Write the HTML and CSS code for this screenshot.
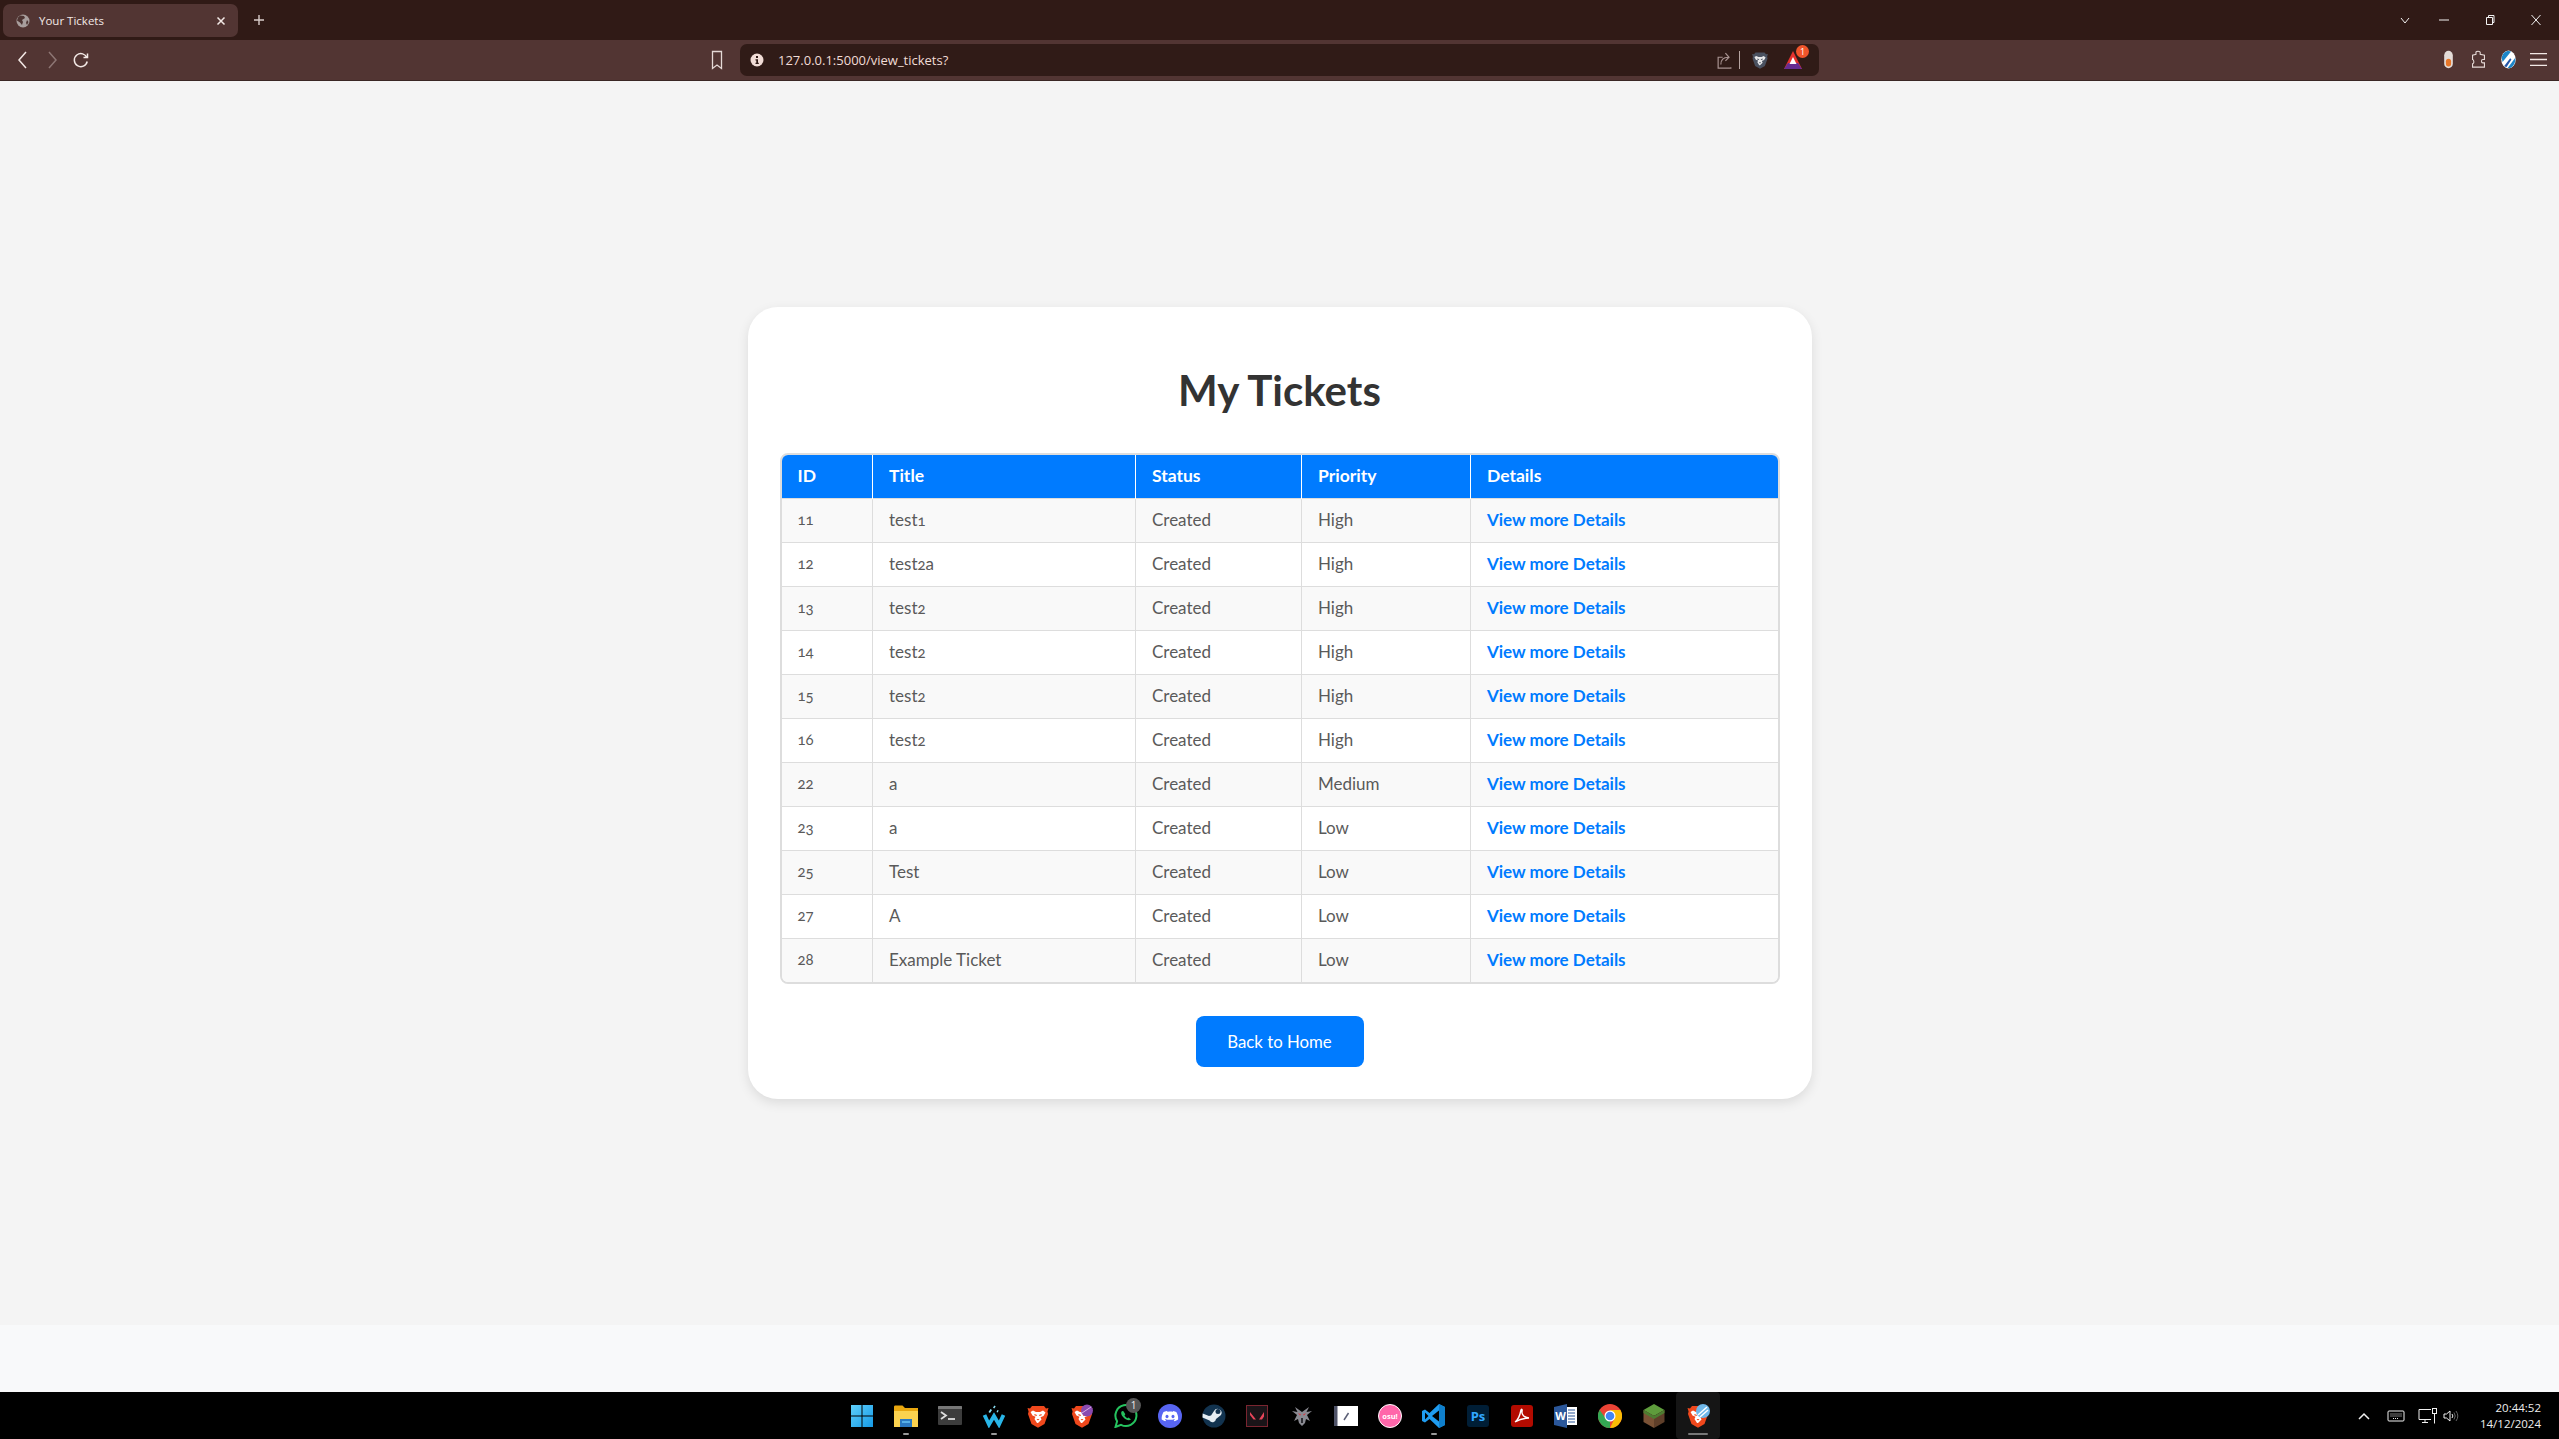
FILE: index.html
```html
<!DOCTYPE html>
<html lang="en">
<head>
    <meta charset="UTF-8">
    <title>Your Tickets</title>
    <link rel="stylesheet" href="styles.css">
</head>
<body>
    <svg class="defs" width="0" height="0">
        <linearGradient id="win-blue" x1="0" y1="0" x2="1" y2="1">
            <stop offset="0" stop-color="#5fd0fb"/>
            <stop offset="1" stop-color="#1599e6"/>
        </linearGradient>
        <symbol id="shield" viewBox="0 0 24 24">
            <path d="M6 2h12l2 2.400 2.500-.4-1 3.500.6 2.500-3.600 10-6.500 3.800L5.500 20 2 10l.6-2.500L1.500 4 4 4.400z"/>
        </symbol>
        <symbol id="lion" viewBox="0 0 24 24">
            <path fill-rule="evenodd" d="M7 6.500l3 1.500h4l3-1.500 2.500 2-2 3.500-3 1.200 1 2.300-3.500 3.500h-1L8.500 15l1-2.300-3-1.200-2-3.500zM8.500 10l2.500 1-.5 1-2.200-.7zM15.500 10l-2.500 1 .5 1 2.200-.7zM10.500 15h3L12 16.500z"/>
        </symbol>
    </svg>

    <div class="tabstrip">
        <div class="tab">
            <svg class="tab-globe" viewBox="0 0 14 14">
                <circle cx="7" cy="7" r="6.500" fill="#a89e9d"/>
                <path d="M4 1.500l4 .5 1 2-3 2 1 2-1 3-2-2.500-3-2 1-3zM11 6l1.500 2-1.500 3-1-2z" fill="#4d3432"/>
            </svg>
            <span class="tab-title">Your Tickets</span>
            <svg class="tab-close" viewBox="0 0 10 10"><path d="M1.500 1.500l7 7M8.500 1.500l-7 7"/></svg>
        </div>
        <svg class="new-tab" viewBox="0 0 12 12"><path d="M6 1v10M1 6h10"/></svg>
        <div class="window-controls">
            <svg class="win-icon win-chevron" viewBox="0 0 12 12"><path d="M2 4l4 5 4-5"/></svg>
            <svg class="win-icon" viewBox="0 0 12 12"><path d="M1 6h10"/></svg>
            <svg class="win-icon" viewBox="0 0 12 12"><path d="M2.500 3.500h6v7h-6zM4.500 3.500v-2h5.500v7h-1.500"/></svg>
            <svg class="win-icon" viewBox="0 0 12 12"><path d="M1.500 1l9 10M10.500 1l-9 10"/></svg>
        </div>
    </div>

    <div class="toolbar">
        <div class="nav-buttons">
            <svg class="nav-icon" viewBox="0 0 16 20"><path d="M11 2L4 10l7 8"/></svg>
            <svg class="nav-icon nav-off" viewBox="0 0 16 20"><path d="M5 2l7 8-7 8"/></svg>
            <svg class="nav-icon" viewBox="0 0 16 20"><path d="M14 8a6.500 6.500 0 1 0 .2 3.500M10.500 7.500h4v-4"/></svg>
        </div>
        <svg class="bookmark" viewBox="0 0 12 20"><path d="M1.500 1.500h9v17L6 15l-4.500 3.500z"/></svg>
        <div class="urlbar">
            <svg class="info-icon" viewBox="0 0 14 14">
                <circle cx="7" cy="7" r="6.500" fill="#f1dcd6"/>
                <path d="M6 3h2v2H6zM5.500 6.200H8v3.600h.8V11H5.500V9.800h.8V7.400h-.8z" fill="#301b17"/>
            </svg>
            <span class="url">127.0.0.1:5000/view_tickets?</span>
            <svg class="share-icon" viewBox="0 0 18 22"><path d="M7 8H2v12h14v-1M5 16c0-5 3-8 8-8M10 3.500L14 8l-4 4"/></svg>
            <span class="url-sep"></span>
            <svg class="shield-icon" viewBox="0 0 24 24">
                <use href="#shield" fill="#4a5160"/>
                <use href="#lion" fill="#e8e8ea"/>
            </svg>
            <span class="bat-icon">
                <svg viewBox="0 0 20 20">
                    <path d="M10 1l9 18H1z" fill="#e4322e"/>
                    <path d="M5 13h10l4 6H1z" fill="#662d91"/>
                    <path d="M10 7l3.500 7h-7z" fill="#fff"/>
                </svg>
                <span class="bat-badge">1</span>
            </span>
        </div>
        <div class="extensions">
            <svg class="ext-icon ext-pill" viewBox="0 0 12 22">
                <rect x="1" y="1" width="10" height="20" rx="5" fill="#e4dcd8"/>
                <rect x="3" y="10" width="6" height="9" rx="3" fill="#e8772a"/>
            </svg>
            <svg class="ext-icon puzzle" viewBox="0 0 20 22"><path d="M7 2.500c0-1.500 5-1.500 5 0V5l5 1v5h-2c-2 0-2 4 0 4h2v5H3v-4c2 0 2-5 0-5V6l4-1z"/></svg>
            <svg class="ext-icon" viewBox="0 0 20 22">
                <ellipse cx="10" cy="11" rx="8.500" ry="10.500" fill="#fff"/>
                <path d="M2 9c1-5 4-8 8-8l3 .5L3 14zM9 21l9-12c.5 4-1 10-6 12z" fill="#1d86c9"/>
                <path d="M5 18.500l7-9 1.500 1.500-6 9z" fill="#2456a8"/>
            </svg>
            <svg class="ext-icon menu" viewBox="0 0 16 14"><path d="M0 1.500h16M0 7h16M0 12.500h16"/></svg>
        </div>
    </div>

    <main class="page">
        <section class="card">
            <h1>My Tickets</h1>
            <div class="table-wrap">
                <table>
                    <colgroup>
                        <col class="col-id"><col class="col-title"><col class="col-status"><col class="col-priority"><col class="col-details">
                    </colgroup>
                    <thead>
                        <tr><th>ID</th><th>Title</th><th>Status</th><th>Priority</th><th>Details</th></tr>
                    </thead>
                    <tbody>
                        <tr><td class="num">11</td><td>test<span class="num">1</span></td><td>Created</td><td>High</td><td><a href="#">View more Details</a></td></tr>
                        <tr><td class="num">12</td><td>test<span class="num">2</span>a</td><td>Created</td><td>High</td><td><a href="#">View more Details</a></td></tr>
                        <tr><td class="num">13</td><td>test<span class="num">2</span></td><td>Created</td><td>High</td><td><a href="#">View more Details</a></td></tr>
                        <tr><td class="num">14</td><td>test<span class="num">2</span></td><td>Created</td><td>High</td><td><a href="#">View more Details</a></td></tr>
                        <tr><td class="num">15</td><td>test<span class="num">2</span></td><td>Created</td><td>High</td><td><a href="#">View more Details</a></td></tr>
                        <tr><td class="num">16</td><td>test<span class="num">2</span></td><td>Created</td><td>High</td><td><a href="#">View more Details</a></td></tr>
                        <tr><td class="num">22</td><td>a</td><td>Created</td><td>Medium</td><td><a href="#">View more Details</a></td></tr>
                        <tr><td class="num">23</td><td>a</td><td>Created</td><td>Low</td><td><a href="#">View more Details</a></td></tr>
                        <tr><td class="num">25</td><td>Test</td><td>Created</td><td>Low</td><td><a href="#">View more Details</a></td></tr>
                        <tr><td class="num">27</td><td>A</td><td>Created</td><td>Low</td><td><a href="#">View more Details</a></td></tr>
                        <tr><td class="num">28</td><td>Example Ticket</td><td>Created</td><td>Low</td><td><a href="#">View more Details</a></td></tr>
                    </tbody>
                </table>
            </div>
            <a class="back-button" href="#">Back to Home</a>
        </section>
    </main>

    <div class="page-foot"></div>

    <footer class="taskbar">
        <div class="task-spacer"></div>
        <div class="task-icons">
            <div class="task-item">
                <svg viewBox="0 0 24 24">
                    <path d="M1 1h10.500v10.500H1zM12.500 1H23v10.500H12.500zM1 12.500h10.500V23H1zM12.500 12.500H23V23H12.500z" fill="url(#win-blue)"/>
                </svg>
            </div>
            <div class="task-item running">
                <svg viewBox="0 0 24 24">
                    <path d="M0 3c0-1 .5-1.500 1.500-1.500h7L11 4h13v19H0z" fill="#e9a70f"/>
                    <path d="M0 7h24v16H0z" fill="#fbd24f"/>
                    <path d="M6 15h12v8H6z" fill="#2b79c2"/>
                    <path d="M8 17h8v2H8z" fill="#57b0e8"/>
                </svg>
            </div>
            <div class="task-item">
                <svg viewBox="0 0 24 24">
                    <rect y="2" width="24" height="19" rx="1" fill="#3c3c3c"/>
                    <path d="M0 3c0-1 .5-1 1-1h22c.5 0 1 0 1 1v2H0z" fill="#777"/>
                    <path d="M3 8l5 3.500L3 15" fill="none" stroke="#ddd" stroke-width="1.800"/>
                    <path d="M10 15h7" stroke="#ddd" stroke-width="1.800"/>
                </svg>
            </div>
            <div class="task-item running">
                <svg viewBox="0 0 24 24">
                    <path d="M2.500 11l4.500 9.500 5-8.500 5 8.500 4.500-9.500" fill="none" stroke="#29b6e8" stroke-width="3.800"/>
                    <path d="M6.500 8l2-3 1.500 1-2 3zM11 3.500l1.500-2 1.200 1-1.500 2zM14.500 8l1-2 1.200.6-1 2z" fill="#8be0f5"/>
                </svg>
            </div>
            <div class="task-item">
                <svg viewBox="0 0 24 24">
                    <use href="#shield" fill="#f0481c"/>
                    <use href="#lion" fill="#fff"/>
                </svg>
            </div>
            <div class="task-item">
                <svg viewBox="0 0 24 24">
                    <use href="#shield" fill="#f0481c"/>
                    <use href="#lion" fill="#fff"/>
                    <circle cx="17" cy="6.500" r="6" fill="#8a4bb0"/>
                    <path d="M12 9l9-6" stroke="#d9b3e8" stroke-width="1"/>
                </svg>
            </div>
            <div class="task-item">
                <svg viewBox="0 0 24 24">
                    <path d="M1.500 23l1.600-5.800A10.500 10.500 0 1 1 7 20.800z" fill="none" stroke="#25c35f" stroke-width="2"/>
                    <path d="M8 7c-1.500 1.500-1 4 1.500 6.500S15 17 17 15.500l-2.500-2-1.200.8c-1-.5-2.300-1.800-2.800-2.800l.8-1.300L9.500 7.200z" fill="#25c35f"/>
                </svg>
                <span class="task-badge">1</span>
            </div>
            <div class="task-item">
                <svg viewBox="0 0 24 24">
                    <circle cx="12" cy="12" r="12" fill="#5865f2"/>
                    <path d="M8.500 7c-1 .2-2 .5-3 1-1.500 2.500-2 5-1.800 7.500 1.200.9 2.500 1.400 3.600 1.700l.8-1.300c-.5-.2-1-.4-1.300-.7l.3-.3c2.800 1.200 6.800 1.200 9.600 0l.3.3c-.4.300-.8.500-1.300.7l.8 1.300c1.200-.3 2.400-.8 3.600-1.700.3-3-.4-5.400-1.800-7.500-1-.5-2-.8-3-1l-.4.700c-1.800-.3-3.200-.3-5 0z" fill="#fff"/>
                    <ellipse cx="9" cy="12.500" rx="1.500" ry="1.700" fill="#5865f2"/>
                    <ellipse cx="15" cy="12.500" rx="1.500" ry="1.700" fill="#5865f2"/>
                </svg>
            </div>
            <div class="task-item">
                <svg viewBox="0 0 24 24">
                    <circle cx="12" cy="12" r="11.500" fill="#12334f"/>
                    <path d="M.5 13.500l7 3a3.500 3.500 0 0 0 6.500-1.500l5-4A4 4 0 1 0 12 7l-3 4.500c-1 0-1.500.2-2 .6L.7 9.500z" fill="#e4edf3"/>
                    <circle cx="16" cy="7.500" r="2.500" fill="#12334f"/>
                </svg>
            </div>
            <div class="task-item">
                <svg viewBox="0 0 24 24">
                    <rect x=".5" y="1.500" width="21" height="21" fill="#1a1418" stroke="#7a2530"/>
                    <path d="M4 8l6 7.500H7.500L4 11zM18 8l-5 7.500h3l2-3z" fill="#e8455a"/>
                </svg>
            </div>
            <div class="task-item">
                <svg viewBox="0 0 24 24">
                    <path d="M12 8L5 3l2.500 5L2 7l5 4-3 6 4-2 1 4 3 3 3-3 1-4 4 2-3-6 5-4-5.500 1L19 3z" fill="#8a8a92"/>
                    <path d="M8 9l3 1.500-1 1zM16 9l-3 1.500 1 1z" fill="#e0303c"/>
                    <path d="M11 14h2v5h-2z" fill="#2c2c32"/>
                </svg>
            </div>
            <div class="task-item">
                <svg viewBox="0 0 24 24">
                    <rect y="2" width="24" height="20" fill="#fff"/>
                    <path d="M0 2h3.500v20H0z" fill="#4f5368"/>
                    <path d="M10 16l4.500-7" stroke="#5a5e75" stroke-width="1.500"/>
                </svg>
            </div>
            <div class="task-item">
                <svg viewBox="0 0 24 24">
                    <circle cx="12" cy="12" r="11.500" fill="#ff66aa" stroke="#fff"/>
                    <text class="osu-text" x="12" y="15">osu!</text>
                </svg>
            </div>
            <div class="task-item running">
                <svg viewBox="0 0 24 24">
                    <path d="M17 0l6 3v18l-6 3-9.500-9L3 18.500 0 17v-10l3-1.500L7.500 9z" fill="#1f9cf0"/>
                    <path d="M17 6.500L10 12l7 5.500z" fill="#000"/>
                    <path d="M3 8.500L6.500 12 3 15.500z" fill="#000"/>
                    <path d="M17 0l6 3v18l-6 3z" fill="#0f7fcc"/>
                </svg>
            </div>
            <div class="task-item">
                <svg viewBox="0 0 24 24">
                    <rect x="1" y="1" width="22" height="22" rx="3" fill="#001e36"/>
                    <text class="ps-text" x="12" y="17">Ps</text>
                </svg>
            </div>
            <div class="task-item">
                <svg viewBox="0 0 24 24">
                    <rect x="1" y="1" width="22" height="22" rx="3" fill="#b30b00"/>
                    <path d="M5 18c3-2 5-7 6-12 .5-1.500 1.500-.5 1 1.500-.5 3 2 6 7 6.500-4 0-9 1-14 4z" fill="none" stroke="#fff" stroke-width="1.400"/>
                </svg>
            </div>
            <div class="task-item">
                <svg viewBox="0 0 24 24">
                    <path d="M9 3h14v18H9z" fill="#fff"/>
                    <path d="M14 6h7M14 9h7M14 12h7M14 15h7M14 18h7" stroke="#2b579a" stroke-width="1.200"/>
                    <path d="M0 3l13-3v24L0 21z" fill="#2b579a"/>
                    <text class="word-text" x="6.500" y="16">W</text>
                </svg>
            </div>
            <div class="task-item">
                <svg viewBox="0 0 24 24">
                    <circle cx="12" cy="12" r="12" fill="#ea4335"/>
                    <path d="M12 24a12 12 0 0 1-10.400-18L7 13.500l5 4z" fill="#34a853"/>
                    <path d="M12 24a12 12 0 0 0 10.400-18H12l5 7.500z" fill="#fbbc05"/>
                    <circle cx="12" cy="12" r="5.500" fill="#fff"/>
                    <circle cx="12" cy="12" r="4.300" fill="#4285f4"/>
                </svg>
            </div>
            <div class="task-item">
                <svg viewBox="0 0 24 24">
                    <path d="M12 0l10.500 6L12 12 1.500 6z" fill="#5e9c3c"/>
                    <path d="M1.500 6L12 12v12L1.500 18z" fill="#7a5236"/>
                    <path d="M22.500 6L12 12v12l10.500-6z" fill="#5f3f2a"/>
                    <path d="M1.500 6L12 12v3L1.500 9zM22.500 6L12 12v3l10.500-6z" fill="#4d7d31"/>
                </svg>
            </div>
            <div class="task-item active running">
                <svg viewBox="0 0 24 24">
                    <use href="#shield" fill="#f0481c"/>
                    <use href="#lion" fill="#fff"/>
                    <circle cx="17" cy="7" r="7" fill="#6fb7e8"/>
                    <path d="M12 11l9-8M14 13l8-7" stroke="#fff" stroke-width="1.500"/>
                </svg>
            </div>
        </div>
        <div class="tray">
            <svg class="tray-icon tray-up" viewBox="0 0 14 14"><path d="M2 10l5-5 5 5"/></svg>
            <svg class="tray-icon tray-key" viewBox="0 0 18 14">
                <rect x="1" y="2" width="16" height="10" rx="1"/>
                <path d="M3.500 5h11M3.500 7h11M6 9.500h6" stroke-dasharray="1 1"/>
            </svg>
            <svg class="tray-icon tray-net" viewBox="0 0 20 16">
                <path d="M13 1.500H1v10h12M7 11.500v3M4 14.500h6"/>
                <rect x="14.500" y=".5" width="4" height="5"/>
                <path d="M16.500 5.500v10"/>
            </svg>
            <svg class="tray-icon tray-sound" viewBox="0 0 18 14">
                <path d="M1 5h2.500L7 2v10L3.500 9H1z"/>
                <path d="M9 5a3 3 0 0 1 0 4"/>
                <path class="tray-dim" d="M11 3.500a6 6 0 0 1 0 7M13 2a8.500 8.500 0 0 1 0 10"/>
            </svg>
            <div class="clock">
                <span>20:44:52</span>
                <span>14/12/2024</span>
            </div>
        </div>
    </footer>
</body>
</html>
```

FILE: styles.css
```css
* {
    box-sizing: border-box;
}

body {
    font-family: Lato, "Open Sans", sans-serif;
    margin: 0;
    padding: 0;
    background-color: #f4f4f4;
    display: flex;
    flex-direction: column;
    height: 100vh;
    overflow: hidden;
}

.defs {
    position: absolute;
}

/* browser chrome */
.tabstrip {
    height: 40px;
    flex-shrink: 0;
    display: flex;
    align-items: center;
    padding-left: 3px;
    background: #301a16;
    color: #f3e9e6;
}

.tab {
    width: 235px;
    height: 33px;
    margin-top: 1px;
    display: flex;
    align-items: center;
    padding: 0 12px 0 13px;
    border-radius: 7px;
    background: #523533;
}

.tab-globe {
    width: 14px;
    height: 14px;
}

.tab-title {
    margin-left: 9px;
    flex-grow: 1;
    font: 11.500px "Open Sans", sans-serif;
}

.tab-close {
    width: 10px;
    height: 10px;
    fill: none;
    stroke: #f3e9e6;
    stroke-width: 1.5;
}

.new-tab {
    width: 12px;
    height: 12px;
    margin-left: 15px;
    fill: none;
    stroke: #d9cdca;
    stroke-width: 1.4;
}

.window-controls {
    margin-left: auto;
    display: flex;
    align-items: center;
    gap: 34px;
    padding-right: 17px;
}

.win-icon {
    width: 12px;
    height: 12px;
    fill: none;
    stroke: #f2f2f2;
    stroke-width: 1;
}

.win-chevron {
    margin-right: -7px;
}

.toolbar {
    height: 41px;
    flex-shrink: 0;
    display: flex;
    align-items: center;
    padding: 0 12px 1px 15px;
    background: #523533;
    border-bottom: 1px solid #3a2624;
}

.nav-buttons {
    display: flex;
    gap: 13px;
}

.nav-icon {
    width: 16px;
    height: 20px;
    fill: none;
    stroke: #f3e9e6;
    stroke-width: 1.5;
}

.nav-off {
    stroke: #8d7674;
}

.bookmark {
    width: 12px;
    height: 20px;
    margin-left: 622px;
    fill: none;
    stroke: #e5d9d6;
    stroke-width: 1.3;
}

.urlbar {
    width: 1079px;
    height: 32px;
    margin-left: 17px;
    display: flex;
    align-items: center;
    padding: 0 16px 0 10px;
    border-radius: 7px;
    background: #301b17;
}

.info-icon {
    width: 14px;
    height: 14px;
}

.url {
    margin-left: 14px;
    flex-grow: 1;
    font: 13px "Open Sans", sans-serif;
    color: #f1dcd6;
}

.share-icon {
    width: 17px;
    height: 20px;
    fill: none;
    stroke: #a89391;
    stroke-width: 1.3;
}

.url-sep {
    width: 1px;
    height: 18px;
    margin: 0 11px 0 6px;
    background: #b6a4a1;
}

.shield-icon {
    width: 18px;
    height: 20px;
}

.bat-icon {
    position: relative;
    width: 20px;
    height: 20px;
    margin-left: 14px;
}

.bat-icon svg {
    display: block;
}

.bat-badge {
    position: absolute;
    top: -5px;
    right: -6px;
    width: 13px;
    height: 13px;
    border-radius: 50%;
    background: #f0552c;
    color: #fff;
    font: 9px/13px "Open Sans", sans-serif;
    text-align: center;
}

.extensions {
    margin-left: auto;
    display: flex;
    align-items: center;
    gap: 13px;
}

.ext-icon {
    width: 17px;
    height: 21px;
}

.ext-pill {
    height: 19px;
}

.puzzle {
    fill: none;
    stroke: #e5d9d6;
    stroke-width: 1.3;
}

.menu {
    fill: none;
    stroke: #f3e9e6;
    stroke-width: 1.3;
}

/* page */
.page {
    flex-grow: 1;
    display: flex;
    align-items: center;
    justify-content: center;
}

.card {
    width: 1064px;
    padding: 32px;
    display: flex;
    flex-direction: column;
    align-items: center;
    background: #fff;
    border-radius: 30px;
    box-shadow: 0 4px 12px rgba(0, 0, 0, 0.1);
}

h1 {
    margin: 20px 0 32px;
    font-size: 42px;
    line-height: 62px;
    font-weight: 700;
    color: #333;
}

.table-wrap {
    width: 1000px;
    margin-bottom: 32px;
    overflow: hidden;
    border: 2px solid #ddd;
    border-radius: 8px;
}

table {
    width: 100%;
    table-layout: fixed;
    border-collapse: collapse;
    font-size: 17px;
    color: #5a5a5a;
}

.col-id { width: 91px; }
.col-title { width: 263px; }
.col-status { width: 166px; }
.col-priority { width: 169px; }

th, td {
    height: 44px;
    padding: 0 16px 2px;
    text-align: left;
    border: 1px solid #ddd;
}

th {
    height: 43px;
    background: #007bff;
    color: white;
    font-size: 17.500px;
    font-weight: 700;
    border-color: white;
    border-width: 0 1px;
}

tr th:first-child, tr td:first-child {
    border-left: none;
}

tr th:last-child, tr td:last-child {
    border-right: none;
}

tbody tr:last-child td {
    border-bottom: none;
}

tbody tr:nth-child(odd) {
    background: #f9f9f9;
}

.num {
    font-variant-numeric: oldstyle-nums;
    font-size: 15px;
}

td a {
    color: #007bff;
    font-weight: 700;
    text-decoration: none;
}

.back-button {
    width: 168px;
    height: 51px;
    display: flex;
    align-items: center;
    justify-content: center;
    padding-bottom: 1px;
    background: #007bff;
    color: white;
    font-size: 16.800px;
    text-decoration: none;
    border-radius: 8px;
}

.page-foot {
    height: 67px;
    flex-shrink: 0;
    background: #f8f9fa;
}

/* taskbar */
.taskbar {
    height: 47px;
    flex-shrink: 0;
    display: grid;
    grid-template-columns: 1fr auto 1fr;
    background: #000;
    color: #eee;
}

.task-icons {
    display: flex;
    margin-left: 1px;
}

.task-item {
    position: relative;
    width: 44px;
    height: 47px;
    display: flex;
    justify-content: center;
    padding-top: 12px;
}

.task-item svg {
    width: 24px;
    height: 24px;
}

.task-item.running::after {
    content: "";
    position: absolute;
    left: 19px;
    bottom: 4px;
    width: 6px;
    height: 2px;
    border-radius: 1px;
    background: #999;
}

.task-item.active {
    background: #151515;
    border-radius: 4px;
}

.task-item.active::after {
    left: 12px;
    width: 20px;
    background: #777;
}

.task-badge {
    position: absolute;
    top: 6px;
    right: 7px;
    width: 15px;
    height: 15px;
    border-radius: 50%;
    background: #555;
    color: #eee;
    font: 10px/15px "Open Sans", sans-serif;
    text-align: center;
}

.osu-text {
    font: 700 7.500px "Open Sans", sans-serif;
    fill: #fff;
    text-anchor: middle;
}

.ps-text {
    font: 700 13px "Open Sans", sans-serif;
    fill: #31a8ff;
    text-anchor: middle;
}

.word-text {
    font: 700 11px "Open Sans", sans-serif;
    fill: #fff;
    text-anchor: middle;
}

.tray {
    display: flex;
    align-items: center;
    justify-content: flex-end;
    padding-right: 18px;
}

.tray-icon {
    fill: none;
    stroke: #f0f0f0;
    stroke-width: 1;
}

.tray-up {
    width: 14px;
    height: 14px;
    stroke-width: 1.5;
}

.tray-key {
    width: 18px;
    height: 14px;
    margin-left: 16px;
}

.tray-net {
    width: 20px;
    height: 16px;
    margin-left: 13px;
}

.tray-sound {
    width: 18px;
    height: 14px;
    margin-left: 5px;
}

.tray-dim {
    stroke: #666;
}

.clock {
    margin-left: 19px;
    display: flex;
    flex-direction: column;
    align-items: flex-end;
    font: 11.500px/16px "Open Sans", sans-serif;
}
```
